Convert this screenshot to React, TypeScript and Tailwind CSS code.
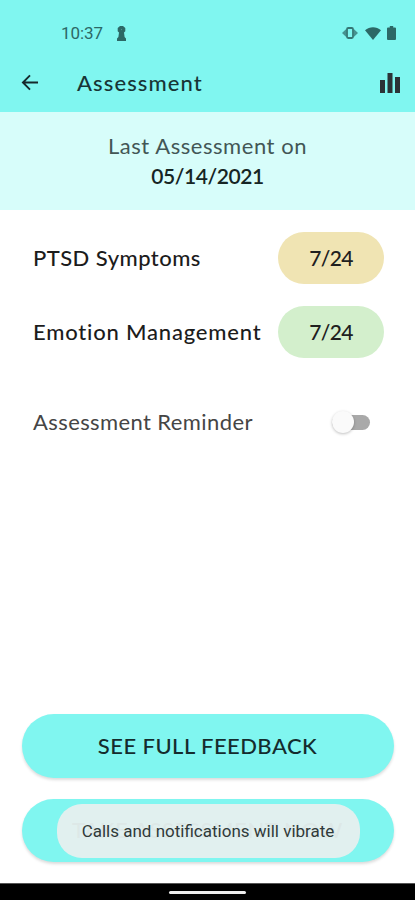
import React from 'react';

interface ScoreRowProps {
  label: string;
  score: string;
  labelClass: string;
  badgeClass: string;
}

const StatusBar: React.FC = () => (
  <div className="flex h-[54px] items-start justify-between pl-[61px] pr-[18px] pt-[23px] text-[#2c6866]">
    <div className="flex items-center">
      <span className="w-[42px] whitespace-nowrap font-['Roboto',sans-serif] text-[17px] leading-5 tracking-[-0.1px]">10:37</span>
      <svg className="ml-[14px] h-[15px] w-[9px]" viewBox="0 0 9 15" fill="currentColor">
        <path d="M3 0h3l2.300 2v3.200L7 6.500 7.600 11 9 12.500V15H0v-2.500L1.400 11 2 6.500.7 5.200V2z" />
        <circle cx="4.500" cy="3.600" r=".6" fill="#4c9a96" />
      </svg>
    </div>
    <div className="flex h-5 items-center">
      {/* Vibrate */}
      <svg className="h-[12px] w-[16px]" viewBox="0 0 16 12">
        <path d="M0 6l4.200-4v8zM16 6l-4.200-4v8z" fill="currentColor" opacity=".7" />
        <rect x="5" y="1" width="6" height="10" rx="1.200" fill="none" stroke="currentColor" strokeWidth="1.800" opacity=".9" />
      </svg>
      {/* Wi-Fi */}
      <svg className="ml-[7px] h-[13px] w-[16px]" viewBox="0 0 16 13" fill="currentColor">
        <path d="M0 3.300C4.600-.9 11.400-.9 16 3.300L8 13z" />
      </svg>
      {/* Battery */}
      <svg className="ml-[6px] mr-[1px] h-[14px] w-[9px]" viewBox="0 0 9 14" fill="currentColor">
        <path d="M2.800 0h3.400v1.500H8q1 0 1 1V13q0 1-1 1H1q-1 0-1-1V2.500q0-1 1-1h1.800z" />
      </svg>
    </div>
  </div>
);

const AppBar: React.FC = () => (
  <div className="flex h-[58px] items-center pl-[21px] pr-[15px]">
    <svg className="-mt-[1px] h-[17px] w-[18px]" viewBox="0 0 19 18" fill="none" stroke="#16292b" strokeWidth="2">
      <path d="M18 9H2M9.500 1.500L2 9l7.500 7.500" />
    </svg>
    <h1 className="ml-[38px] text-[22px] font-medium leading-7 tracking-[1.1px] text-[#173536]">Assessment</h1>
    <svg className="ml-auto h-5 w-5" viewBox="0 0 20 20" fill="#2b3337">
      <rect x="0" y="7" width="5" height="13" />
      <rect x="7.500" y="0" width="5" height="20" />
      <rect x="15" y="4" width="5" height="16" />
    </svg>
  </div>
);

const ScoreRow: React.FC<ScoreRowProps> = ({ label, score, labelClass, badgeClass }) => (
  <div className="flex h-[52px] items-center justify-between">
    <span className={`whitespace-nowrap pb-[1px] text-[22px] font-medium text-[#1c1c1c] ${labelClass}`}>{label}</span>
    <span
      className={`flex h-[52px] w-[106px] items-center justify-center rounded-full text-[21px] font-medium tracking-[-0.6px] text-[#202020] ${badgeClass}`}
    >
      {score}
    </span>
  </div>
);

export default function App() {
  return (
    <div className="flex h-[900px] w-[415px] flex-col overflow-hidden bg-white font-['Lato',sans-serif]">
      <header className="h-[112px] bg-[#80f6f0]">
        <StatusBar />
        <AppBar />
      </header>

      <section className="flex h-[98px] flex-col items-center bg-[#d7fdfa] pt-[19px] leading-[30px]">
        <p className="text-[22px] tracking-[0.55px] text-[#435655]">Last Assessment on</p>
        <p className="text-[21px] font-semibold tracking-[-0.4px] text-[#162524]">05/14/2021</p>
      </section>

      <main className="flex flex-1 flex-col pt-[22px]">
        <div className="flex flex-col gap-[22px] pl-[33px] pr-[31px]">
          <ScoreRow label="PTSD Symptoms" score="7/24" labelClass="tracking-[0.45px]" badgeClass="bg-[#f0e4b3]" />
          <ScoreRow label="Emotion Management" score="7/24" labelClass="tracking-[0.8px]" badgeClass="bg-[#d3efcc]" />
        </div>

        <div className="mt-[44px] flex h-10 items-center justify-between pl-[33px] pr-[45px]">
          <span className="pb-[2px] text-[22px] tracking-[0.4px] text-[#454545]">Assessment Reminder</span>
          <div className="flex h-[15px] w-[38px] items-center rounded-full bg-[#a9a9a9]">
            <div className="h-[22px] w-[22px] rounded-full bg-[#fafafa] shadow-[0_1px_3px_rgba(0,0,0,0.25)]" />
          </div>
        </div>

        <div className="mt-auto flex flex-col gap-[21px] px-[21.500px] pb-[21px]">
          <button className="h-[64px] rounded-full bg-[#80f6f0] pb-[1px] text-[22px] font-medium tracking-[0.45px] text-[#142c2d] shadow-[0_2px_3px_rgba(0,0,0,0.14)]">
            SEE FULL FEEDBACK
          </button>
          <div className="relative">
            <button className="block h-[63px] w-full rounded-full bg-[#80f6f0] pb-[3px] text-[22px] font-medium tracking-[0.6px] text-[#183233] shadow-[0_2px_3px_rgba(0,0,0,0.14)]">
              TAKE ASSESSMENT NOW
            </button>
            {/* System toast over the button */}
            <div className="absolute left-[35px] top-[5px] flex h-[54px] w-[303px] items-center justify-center rounded-[25px] bg-[#e5efee]/96 pt-[2px] font-['Roboto',sans-serif] text-[17px] text-[#303a3a]">
              <span className="whitespace-nowrap">Calls and notifications will vibrate</span>
            </div>
          </div>
        </div>
      </main>

      <footer className="flex h-[17px] justify-center border-t border-[#555] bg-black pt-[7px]">
        <div className="h-[3px] w-[77px] rounded-full bg-[#eee]" />
      </footer>
    </div>
  );
}
